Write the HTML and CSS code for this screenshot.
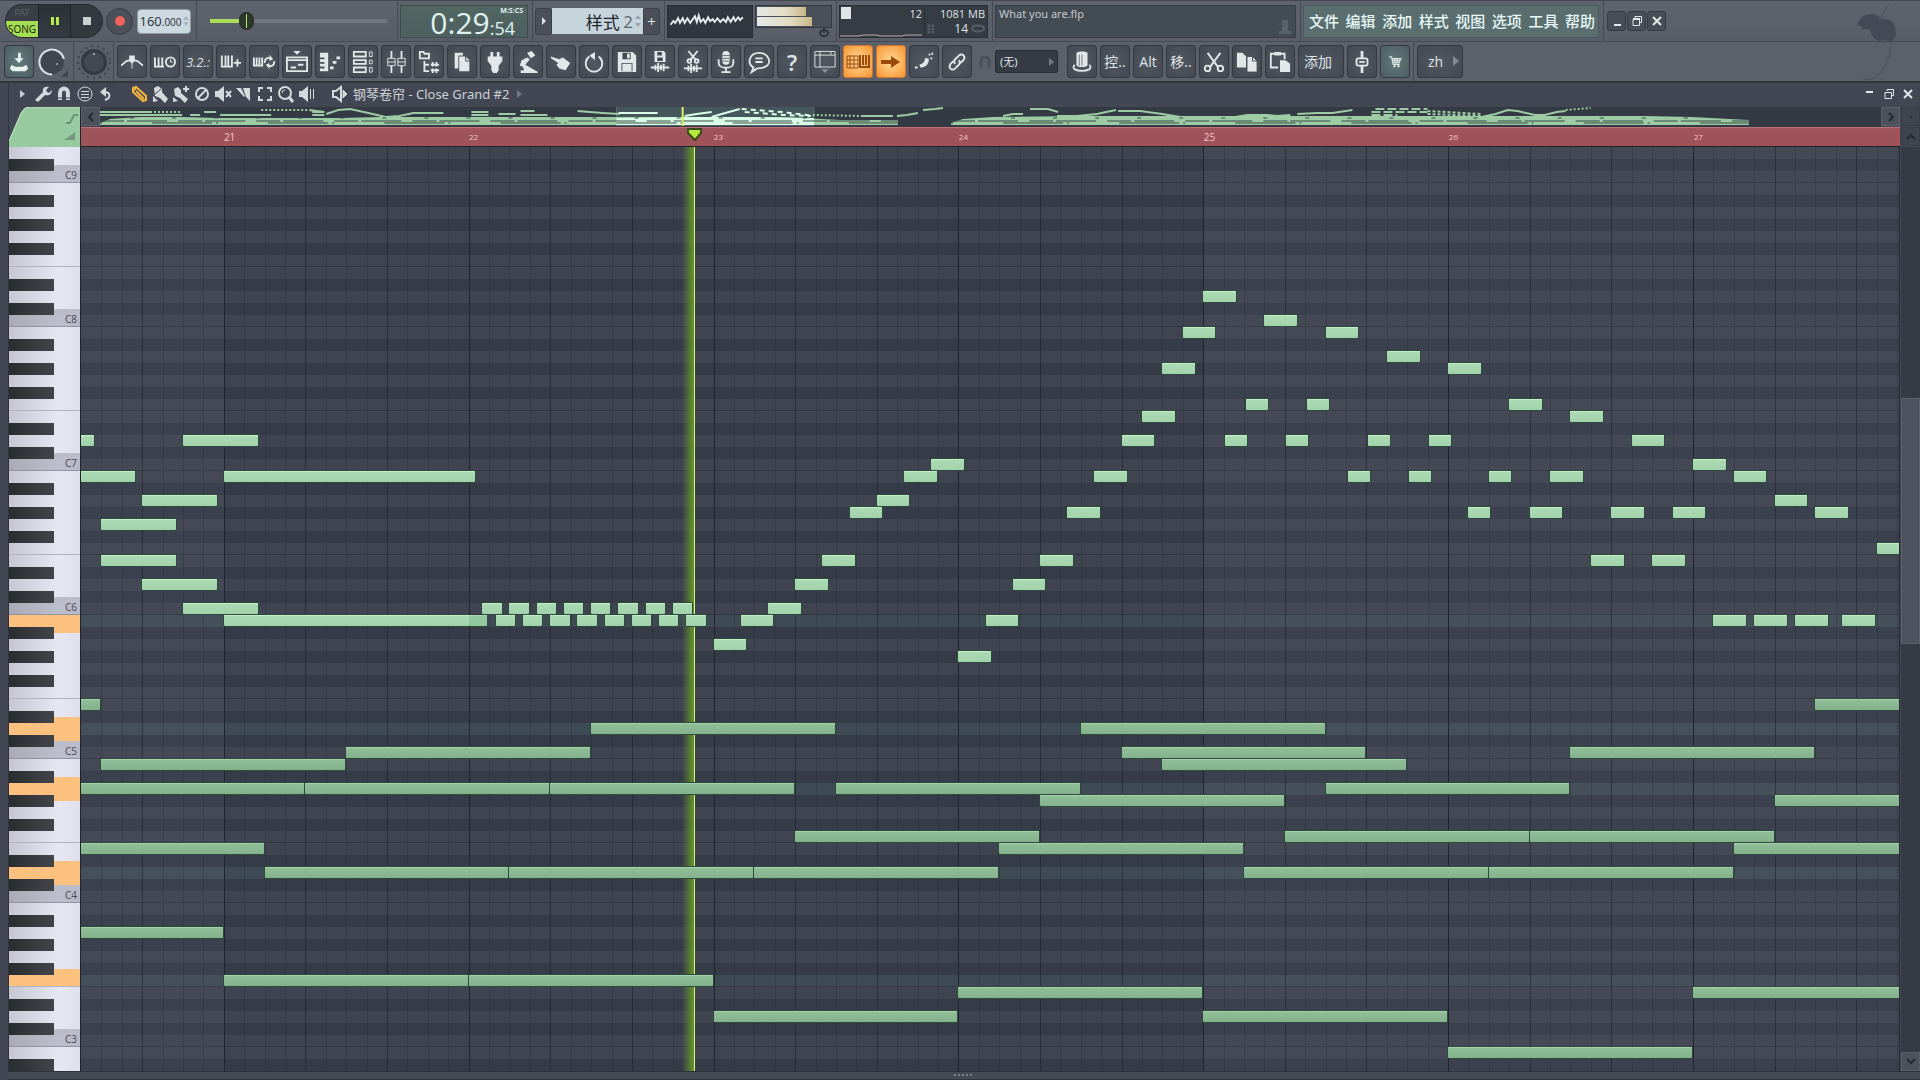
FILE: index.html
```html
<!DOCTYPE html>
<html lang="zh">
<head>
<meta charset="utf-8">
<title>What you are.flp</title>
<link rel="stylesheet" href="styles.css">
</head>
<body>
<div class="app">
  <header class="bar bar-main">
    <section class="sec sec-transport">
      <div class="transport">
        <button class="mode" aria-label="PAT / SONG"><span class="pat">PAT</span><span class="song">SONG</span></button>
        <button class="tbtn pause" aria-label="Pause"><svg width="10" height="10"><path d="M1 1h3v8H1zM6 1h3v8H6z" fill="#b4ea4c"/></svg></button>
        <button class="tbtn stop" aria-label="Stop"><svg width="8" height="8"><path d="M0 0h8v8H0z" fill="#c9ced0"/></svg></button>
      </div>
      <button class="rec" aria-label="Record"><svg width="12" height="12"><circle cx="6" cy="6" r="5" fill="#f0625c"/></svg></button>
      <div class="tempo"><span class="big">160</span><span class="small">.000</span><svg width="6" height="12"><path d="M0 5l3-4 3 4zM0 7l3 4 3-4z" fill="#a9b3bb"/></svg></div>
    </section>
    <section class="sec sec-pitch"><input class="pitch" type="range" min="0" max="100" value="18" aria-label="Song position"></section>
    <section class="sec"><div class="clock"><span class="clock-main">0:29</span><span class="clock-side"><span class="unit">M:S:CS</span><span class="cs">:54</span></span></div></section>
    <section class="sec">
      <div class="pattern">
        <button class="pbtn" aria-label="Pattern menu"><svg width="6" height="10"><path d="M1 1l4 4-4 4z" fill="#d9dfe2"/></svg></button>
        <div class="pname">样式 <span class="pnum">2</span><svg width="6" height="14"><path d="M0 5l3-4 3 4zM0 9l3 4 3-4z" fill="#9aa5ad"/></svg></div>
        <button class="pbtn" aria-label="Add pattern">+</button>
      </div>
    </section>
    <section class="sec sec-scope">
      <div class="scope"><svg viewBox="0 0 86 33" width="84" height="31"><path d="M1 20l3-4 2 2 3-5 2 5 3-5 2 5 3-5 3 5 2-3 3-4 2 6 2-7 2 7 3-3 2 4 3-6 2 4 3-2 2 3 3-4 3 4 3-3 3 3 2-5 3 5 3-5 2 4 3-4 2 3 3-3" fill="none" stroke="#e6eaec" stroke-width="2"/></svg></div>
      <div class="meters"><div class="meter-box"><div class="meter m1"></div><div class="meter m2"></div></div><svg class="meter-knob" width="12" height="10"><ellipse cx="6" cy="5" rx="4" ry="3" fill="none" stroke="#31363e" stroke-width="2"/><path d="M6 0v5" stroke="#31363e" stroke-width="2"/></svg></div>
    </section>
    <section class="sec">
      <div class="cpu">
        <div class="cpu-graph"><span class="cpu-block"></span><span class="cpu-val">12</span><svg class="cpu-line" width="84" height="4"><path d="M0 3h18l6-1h12l4 1h22l4-1h16" stroke="#b9a9ae" fill="none"/></svg></div>
        <div class="cpu-mem"><span>1081 MB</span><span class="poly"><svg width="8" height="10"><path d="M0 2h8M0 5h8M0 8h8M2 0v10M6 0v10" stroke="#596067"/></svg><b>14</b><svg width="14" height="9"><ellipse cx="7" cy="4.500" rx="6" ry="3" fill="none" stroke="#596067" stroke-width="2"/></svg></span></div>
      </div>
    </section>
    <section class="sec"><div class="hint"><span>What you are.flp</span><svg width="14" height="17"><path d="M4 1h6v11H4zM1 12h12v3H1z" fill="#596169"/></svg></div></section>
    <section class="sec sec-menu">
      <nav class="menu"><a href="#">文件</a><a href="#">编辑</a><a href="#">添加</a><a href="#">样式</a><a href="#">视图</a><a href="#">选项</a><a href="#">工具</a><a href="#">帮助</a></nav>
    </section>
    <div class="winbtns">
      <button aria-label="Minimize"><svg width="12" height="12"><path d="M3 9h7v2H3z" fill="#e3e7e9"/></svg></button>
      <button aria-label="Restore"><svg width="12" height="12" fill="none" stroke="#e3e7e9"><path d="M4 3V1.500h6.500v6H9M2 4.500h6.500v6H2z"/><path d="M2 4h7" stroke-width="2"/></svg></button>
      <button aria-label="Close"><svg width="12" height="12"><path d="M2 2l8 8M10 2l-8 8" stroke="#e3e7e9" stroke-width="2"/></svg></button>
    </div>
    <svg class="logo" viewBox="0 0 50 90" width="50" height="78"><path d="M0 26c1-7 7-13 15-13 6 0 10 2 13 6 6-1 12 1 14 5 2 4 3 9 2 15-2 3-4 5-6 5-3-1-6-2-9-1-4 2-8 0-11-4-2-3-3-7-4-8-3-2-6-1-10 0l2-4z" fill="#444a55"/><path d="M27 20c1-7 5-13 10-19M39 44c0 14-6 30-15 40-5 4-11 5-17 4" fill="none" stroke="#484e58" stroke-width="1"/></svg>
  </header>

  <div class="bar bar-tools">
    <div class="group group-a">
      <button class="tool teal" aria-label="Export"><svg viewBox="0 0 24 24"><path d="M11 2h3v6h3l-5 5-5-5h4zM4 15l3 2h10l3-2 2 4-3 3H5l-3-3z" fill="#e8f2ef"/><path d="M8 15h8v2H8z" fill="#5a7573"/></svg></button>
      <svg class="knob" viewBox="0 0 32 32"><circle cx="16" cy="16" r="12" fill="#40464f"/><path d="M16 28.500A12.500 12.500 0 1 1 28 13" fill="none" stroke="#d8dde0" stroke-width="2"/><circle cx="21" cy="18" r="1" fill="#a5acb2"/><path d="M32 24v7h-7z" fill="#41474f"/></svg>
    </div>
    <div class="group group-b"><svg class="knob" viewBox="0 0 36 36"><circle cx="18" cy="18" r="16" fill="none" stroke="#3e444d" stroke-width="2" stroke-dasharray="2 4"/><circle cx="18" cy="18" r="13" fill="#343a43"/><circle cx="18" cy="18" r="10" fill="#434953"/><circle cx="18" cy="10" r="1" fill="#b4babf"/></svg></div>
    <div class="group group-c">
      <button class="tool" aria-label="Metronome"><svg viewBox="0 0 24 24" fill="none" stroke="#e3e7e9" stroke-width="2"><path d="M0 16l6-5 4-1M24 16l-6-5-4-1"/><path d="M9 5h6v6l-3 3-3-3z" fill="#e3e7e9" stroke="none"/><path d="M12 12v7" stroke-width="1"/></svg></button>
      <button class="tool" aria-label="Wait for input"><svg viewBox="0 0 24 24" fill="none" stroke="#e3e7e9" stroke-width="2"><path d="M1 7v10h10M5 7v9M9 7v9"/><circle cx="18" cy="12" r="5"/><path d="M18 9v3h3" stroke-width="1"/></svg></button>
      <button class="tool count"><i>3.2.:</i></button>
      <button class="tool" aria-label="Step edit"><svg viewBox="0 0 24 24" fill="none" stroke="#e3e7e9" stroke-width="2"><path d="M2 5v12h11V5M6 5v11M9 5v11M15 13h8M19 9v8"/></svg></button>
      <button class="tool" aria-label="Loop record"><svg viewBox="0 0 24 24" fill="none" stroke="#e3e7e9" stroke-width="2"><path d="M1 7v9h9V7M4 7v8M7 7v8"/><path d="M13 13c-1-5 4-7 7-4M23 11c1 5-4 7-7 4"/><path d="M18 4l4 5-4 2zM18 20l-4-5 4-2z" fill="#e3e7e9" stroke="none"/></svg></button>
      <button class="tool" aria-label="Playlist"><svg viewBox="0 0 24 24" fill="none" stroke="#e3e7e9"><path d="M8 0h8l-4 4z" fill="#e3e7e9" stroke="none"/><path d="M1 7h22v15H1zM1 10h22" stroke-width="2"/><path d="M5 18h6M13 15h6" stroke-width="2"/></svg></button>
      <button class="tool" aria-label="Piano roll"><svg viewBox="0 0 24 24" fill="#e3e7e9"><path d="M1 2h9v20H1v-3h5v-2H1v-3h5v-2H1V9h5V7H1zM12 17h4v3h-4zM15 11h4v3h-4zM19 6h4v3h-4z"/></svg></button>
      <button class="tool" aria-label="Channel rack"><svg viewBox="0 0 24 24" fill="none" stroke="#e3e7e9" stroke-width="2"><path d="M2 1h13v5H2zM2 10h13v4H2zM2 18h13v5H2z"/><path d="M19 1h3v5h-3zM19 10h3v4h-3zM19 18h3v5h-3z" stroke-width="1"/></svg></button>
      <button class="tool" aria-label="Mixer"><svg viewBox="0 0 24 24" fill="none" stroke="#e3e7e9" stroke-width="2"><path d="M7 0v8M7 16v8M18 0v8M18 16v8"/><path d="M3 8h8v8H3zM14 8h8v8h-8zM3 12h8M14 12h8" stroke-width="1"/></svg></button>
      <button class="tool" aria-label="Browser"><svg viewBox="0 0 24 24" fill="none" stroke="#e3e7e9"><path d="M2 1h4l1 2h5v5H2zM7 11v11h5M7 15h5M14 15h9M14 21h9M16 12v5M20 12v5M16 19v5M20 19v5" stroke-width="2"/></svg></button>
      <button class="tool" aria-label="Plugins"><svg viewBox="0 0 24 24" fill="#e3e7e9"><path d="M4 2h9v3H8v14H4z"/><path d="M9 6h7l4 4v12H9z"/><path d="M16 5v6h5" fill="none" stroke="#454b54"/></svg></button>
      <button class="tool" aria-label="Plugin picker"><svg viewBox="0 0 24 24" fill="#e3e7e9"><path d="M7 1h3v5h4V1h3v5h3v5l-4 5v5l-2 3h-4l-2-3v-5l-4-5V6h3z"/></svg></button>
      <button class="tool" aria-label="Tempo tapper"><svg viewBox="0 0 24 24" fill="#e3e7e9"><path d="M11 2l5-2 4 5-5 3zM11 7l3 2-5 6 14 8-1 1H4v-3h4l-2-4-3-1 2-6z"/></svg></button>
      <button class="tool" aria-label="Touch controller"><svg viewBox="0 0 24 24" fill="#e3e7e9"><path d="M1 6l9 3 4-2 8 6-5 8-7-2-3-4 2-2-8-5z"/></svg></button>
      <button class="tool" aria-label="Undo"><svg viewBox="0 0 24 24" fill="none" stroke="#e3e7e9" stroke-width="2"><path d="M7 6a9 9 0 1 0 10 0"/><path d="M13 1v9L7 5z" fill="#e3e7e9" stroke="none"/></svg></button>
      <button class="tool" aria-label="Save"><svg viewBox="0 0 24 24" fill="#e3e7e9"><path d="M2 1h16l4 4v18H2z"/><path d="M7 2h9v7H7zM6 13h12v9H6z" fill="#454b54"/><path d="M12 3h3v5h-3zM7 14h10v8H7z"/></svg></button>
      <button class="tool" aria-label="Render"><svg viewBox="0 0 24 24" fill="#e3e7e9"><path d="M6 0h10l2 2v10H6z"/><path d="M9 1h5v4H9zM9 7h6v4H9z" fill="#454b54"/><path d="M2 18h20M7 15v6M10 13v10M13 15v6M16 14v8" stroke="#e3e7e9" stroke-width="2"/></svg></button>
      <button class="tool" aria-label="Edison"><svg viewBox="0 0 24 24" fill="none" stroke="#e3e7e9" stroke-width="2"><path d="M7 0l8 10M17 0L9 10"/><circle cx="8" cy="11" r="2"/><circle cx="16" cy="11" r="2"/><path d="M2 19h20M7 16v6M10 14v10M13 16v6M16 15v8"/></svg></button>
      <button class="tool" aria-label="Record audio"><svg viewBox="0 0 24 24" fill="none" stroke="#e3e7e9" stroke-width="2"><rect x="8" y="0" width="8" height="15" rx="4" fill="#e3e7e9" stroke="none"/><path d="M4 9v4c0 7 16 7 16 0V9M12 18v4M7 23h10"/><path d="M8 5h8M8 8h8M8 11h8" stroke="#5a6068" stroke-width="1"/></svg></button>
      <button class="tool" aria-label="News"><svg viewBox="0 0 24 24" fill="none" stroke="#e3e7e9" stroke-width="2"><path d="M6 18C-2 13 2 2 12 2s15 11 7 15c-3 2-6 2-9 2l-6 4z"/><path d="M8 8h8M8 12h8"/></svg></button>
      <button class="tool help">?</button>
      <button class="tool" aria-label="Arrange"><svg viewBox="0 0 24 24" fill="none" stroke="#e3e7e9"><path d="M1 0.500h22v17H1zM6.500 1v17M1 4.500h22M18.500 1v3"/><path d="M8 20h8l-4 4z" fill="#8b9197" stroke="none"/></svg></button>
      <button class="tool hot" aria-label="Typing keyboard"><svg viewBox="0 0 24 24" fill="none" stroke="#9c4a0c" stroke-width="2"><path d="M1 6h11v12H1zM1 10h11M1 14h11M4 6v12M8 6v12" stroke-width="1"/><path d="M14 5v12h9V5M17 5v10M20 5v10"/></svg></button>
      <button class="tool hot" aria-label="Follow"><svg viewBox="0 0 24 24"><path d="M2 10h10V6l9 6-9 6v-4H2z" fill="#9c4a0c"/></svg></button>
      <button class="tool" aria-label="Slide"><svg viewBox="0 0 24 24" fill="#e3e7e9"><path d="M13 8h4c1 6-3 10-9 10l-1-3c4-1 6-3 6-7zM2 17h3v2H2zM17 3h2v2h-2zM20 2h2v2h-2zM19 7h2v2h-2z"/></svg></button>
      <button class="tool" aria-label="Link"><svg viewBox="0 0 24 24" fill="none" stroke="#e3e7e9" stroke-width="2"><path d="M10 14c-2-2-1-4 0-5l4-4c4-3 8 1 5 5l-3 3M14 10c2 2 1 4 0 5l-4 4c-4 3-8-1-5-5l3-3"/></svg></button>
    </div>
    <div class="group group-d">
      <svg class="dim" viewBox="0 0 12 14" width="12" height="14"><path d="M2 13V6c0-5 8-5 8 0v7" fill="none" stroke="#4b515b" stroke-width="3"/></svg>
      <select class="snap" aria-label="Snap"><option>(无)</option></select>
      <svg class="snap-arrow" width="5" height="9"><path d="M0 0l5 4-5 4z" fill="#747b84"/></svg>
    </div>
    <div class="group group-e">
      <button class="tool" aria-label="Tools"><svg viewBox="0 0 24 24" fill="#e3e7e9"><path d="M6 2c3-2 9-2 12 0v14c-3 2-9 2-12 0z"/><path d="M4 15c-8 9 24 9 16 0" fill="none" stroke="#e3e7e9" stroke-width="2"/><path d="M9 4v12M12 4v12" stroke="#6b7179"/></svg></button>
      <button class="tool text">控..</button>
      <button class="tool text">Alt</button>
      <button class="tool text">移..</button>
      <button class="tool" aria-label="Cut"><svg viewBox="0 0 24 24" fill="none" stroke="#e3e7e9" stroke-width="2"><path d="M5 2l11 15M19 2L8 17"/><circle cx="5" cy="19" r="3"/><circle cx="19" cy="19" r="3"/></svg></button>
      <button class="tool" aria-label="Copy"><svg viewBox="0 0 24 24" fill="#e3e7e9"><path d="M1 2h6l4 4v12H1z"/><path d="M12 6h6l5 5v12H12z" stroke="#454b54"/><path d="M18 6v5h5" fill="none" stroke="#454b54"/></svg></button>
      <button class="tool" aria-label="Paste"><svg viewBox="0 0 24 24" fill="none" stroke="#e3e7e9" stroke-width="2"><path d="M10 18H2V3h15v6"/><path d="M6 1h7v4H6zM12 10h6l5 4v9H12z" fill="#e3e7e9" stroke="none"/></svg></button>
      <button class="tool text wide">添加</button>
      <button class="tool" aria-label="Fader"><svg viewBox="0 0 24 24" fill="none" stroke="#e3e7e9" stroke-width="2"><path d="M12 0v8M12 16v8" stroke-width="3"/><rect x="6" y="8" width="12" height="8" rx="2"/><path d="M9 12h6"/></svg></button>
      <button class="tool teal cart" aria-label="Shop"><svg viewBox="0 0 24 24" fill="none" stroke="#dbe5e3" stroke-width="2"><path d="M2 4h4l3 13h11M7 7h15l-3 7H9M8 10h13M12 7v7M16 7v7"/><circle cx="11" cy="20" r="1"/><circle cx="18" cy="20" r="1"/></svg></button>
    </div>
    <div class="group group-f"><button class="tool text lang">zh<svg width="6" height="11"><path d="M0 0l6 5-6 5z" fill="#868c94"/></svg></button></div>
  </div>

  <main class="window">
    <div class="titlebar">
      <div class="ticons">
        <svg viewBox="0 0 18 18"><path d="M7 5l5 4-5 4z" fill="#c9ced4"/></svg>
        <svg viewBox="0 0 18 18" fill="#d5d9de"><path d="M1 15l8-8c-1-4 2-6 6-5l-3 3 1 2 2 1 3-3c0 4-3 6-7 5l-7 7z"/></svg>
        <svg viewBox="0 0 18 18" fill="none"><path d="M5 15V8c0-6 8-6 8 0v7" stroke="#d5d9de" stroke-width="4"/><path d="M3 13h4M11 13h4" stroke="#42475a" stroke-width="1"/></svg>
        <svg viewBox="0 0 18 18" fill="none" stroke="#d5d9de"><circle cx="9" cy="9" r="7"/><path d="M5 6.500h8M5 9.500h8M5 12.500h8"/></svg>
        <svg viewBox="0 0 18 18" fill="none" stroke="#d5d9de" stroke-width="2"><path d="M8 15c6-2 6-8-1-8"/><path d="M9 2v10L3 7z" fill="#d5d9de" stroke="none"/></svg>
      </div>
      <div class="ticons tools">
        <svg viewBox="0 0 18 18" fill="none" stroke="#f0b440" stroke-width="2"><path d="M3 3l3-1 10 9v4l-3 1L3 7z"/><path d="M3 6l3-3M6 6l8 8"/></svg>
        <svg viewBox="0 0 18 18" fill="#d5d9de"><path d="M3 3l4-2 4 3v3l6 7-3 4-5-5-5-2zM2 11l5 5-5 1z"/><path d="M4 9l6-5" stroke="#42475a"/></svg>
        <svg viewBox="0 0 18 18" fill="#d5d9de"><path d="M2 4l4-2 3 3v3l7 6-3 4-5-5-5-2zM1 12l5 4-5 1zM13 1h2v6h-2zM11 3h6v2h-6z"/></svg>
        <svg viewBox="0 0 18 18" fill="none" stroke="#d5d9de" stroke-width="2"><circle cx="9" cy="9" r="6"/><path d="M5 13l8-8"/></svg>
        <svg viewBox="0 0 18 18" fill="#d5d9de"><path d="M1 6h3l6-5v16l-6-5H1z"/><path d="M12 6l5 6M17 6l-5 6" stroke="#d5d9de" stroke-width="2"/></svg>
        <svg viewBox="0 0 18 18" fill="#d5d9de"><path d="M1 3h5l4 8-1 1zM8 3h7v13l-4-4z"/></svg>
        <svg viewBox="0 0 18 18" fill="none" stroke="#d5d9de" stroke-width="2"><path d="M3 7V3h4M11 3h4v4M15 11v4h-4M7 15H3v-4"/></svg>
        <svg viewBox="0 0 18 18" fill="none" stroke="#d5d9de"><circle cx="8" cy="8" r="6" stroke-width="2"/><path d="M5 8a3 3 0 0 1 3-3"/><path d="M12 12l4 5" stroke-width="3"/></svg>
        <svg viewBox="0 0 18 18" fill="#d5d9de"><path d="M1 6h3l6-5v16l-6-5H1zM12 4h1v10h-1zM15 4h1v10h-1z"/></svg>
      </div>
      <h1 class="title"><svg viewBox="0 0 18 18" fill="none" stroke="#d5d9de"><path d="M2 6h3l5-4v14l-5-4H2z" stroke-width="2"/><path d="M12 5l4 4-4 4z" fill="#d5d9de"/></svg>钢琴卷帘 - Close Grand #2<svg class="more" width="5" height="9"><path d="M0 0l5 4-5 4z" fill="#747b84"/></svg></h1>
      <div class="wctl">
        <button aria-label="Minimize"><svg width="12" height="12"><path d="M2 3h7v2H2z" fill="#e3e7e9"/></svg></button>
        <button aria-label="Restore"><svg width="12" height="12" fill="none" stroke="#e3e7e9"><path d="M4 3V1.500h6.500v6H9M2 4.500h6.500v6H2z"/></svg></button>
        <button aria-label="Close"><svg width="12" height="12"><path d="M2 2l8 8M10 2l-8 8" stroke="#e3e7e9" stroke-width="2"/></svg></button>
      </div>
    </div>

    <div class="editor">
      <div class="corner"><svg viewBox="0 0 71 40" preserveAspectRatio="none"><path d="M0 40V34L12 6Q15 0 20 0H71V40z" fill="#98ca9f"/><path d="M0 34L12 6Q15 0 20 0H71" fill="none" stroke="#c4e6c8"/><path d="M57 16h4l4-8h4" fill="none" stroke="#6c9375" stroke-width="2"/><path d="M66 25v8H55z" fill="#729a7a"/></svg></div>
      <button class="sq prev" aria-label="Scroll left"><svg width="10" height="10"><path d="M7 1L3 5l4 4" fill="none" stroke="#242a33" stroke-width="2"/></svg></button>
      <div class="overview">
        <svg viewBox="20 0 1779 19" preserveAspectRatio="none">
          <path d="M536-1h197v20H536z" fill="#46565d" stroke="#61717a"/>
          <g fill="none" stroke="#9ccba4">
            <path stroke-width="2" d="M20 5h50M20 8h82M110 8h10M124 5h12M140 8h51M232 5h12M232 8h12M345 6h18M391 5h17M391 8h17M418 7h17M440 4h14M440 8h27M782 9h30"/>
            <path stroke-width="2" stroke-dasharray="2 2" d="M70 5h31M181 3h48M732 8l50 1M1484 3l25-2"/>
            <path stroke-width="2" d="M229 3l15 2M246 7l12-4 12-1 18 4 17 4 14-1 14-3 15 0M497 4l25 2 17 1M816 9l10-1 11-2M842 3l12-1 8-1M922 9l10-2h10M949 2h18l10 3M976 9h20l20-2 9-2 10-2M1037 4h22l22 3 18 3M1154 10l12-2h20l10 1 13-1M1216 7l20-1h15l20-3M1400 10l14-3 12-4 10 1 17 4 10 0 12-3 9-1"/>
            <path stroke-width="2" stroke-dasharray="9 3" d="M1294 2h52M1290 5h56M1290 8h26"/>
            <path stroke-width="2" stroke-dasharray="3 2" d="M1346 4l54 3M1346 7l54 2"/>
          </g>
          <g fill="#9ccba4"><path d="M20 18v-2l10-4 30-2h40l40 1h120l40-1h400l60 3h57v5zM870 18v-2l12-4 30-2 90-1h560l48 1 57 3v5z"/></g>
          <path d="M536 11l60-1h60l77 1v7H536z" fill="#d9ffe6"/>
          <path d="M20 14H817M870 14h797" stroke="#3c4d4b" stroke-dasharray="24 3 40 11"/>
          <path d="M50 11H760M930 11h690" stroke="#3c4d4b" stroke-dasharray="4 38"/>
          <path d="M20 16H817M870 16h797" stroke="#3c4d4b" stroke-dasharray="2 50 60 4"/>
          <g fill="none" stroke="#d9ffe6" stroke-width="2"><path d="M538 6h39M604 9l12-2 15-2M631 10l10-3 18-5"/><path stroke-dasharray="5 4" d="M661 2l40 3 32 4M664 5l40 3 26 1"/></g>
          <path d="M602-1v20" stroke="#dcec5a" stroke-width="2"/>
        </svg>
      </div>
      <button class="sq next" aria-label="Scroll right"><svg width="10" height="10"><path d="M3 1l4 4-4 4" fill="none" stroke="#242a33" stroke-width="2"/></svg></button>
      <button class="sq dotb" aria-label="Zoom"><svg width="10" height="10"><circle cx="5" cy="5" r="1" fill="#20252d"/></svg></button>
      <div class="ruler" id="ruler"></div>
      <button class="sq up" aria-label="Scroll up"><svg width="12" height="8"><path d="M2 6l4-4 4 4" fill="none" stroke="#242a33" stroke-width="2"/></svg></button>
      <div class="keys" id="keys"></div>
      <div class="grid" id="grid">
        <div class="rows" id="rows"></div>
      </div>
      <div class="vscroll">
        <div class="track-top"></div><div class="thumb"></div><div class="track-bottom"></div>
        <button class="sq" aria-label="Scroll down"><svg width="12" height="8"><path d="M2 2l4 4 4-4" fill="none" stroke="#242a33" stroke-width="2"/></svg></button>
      </div>
    </div>
    <footer class="grip"><svg width="20" height="3"><path d="M0 1h20" stroke="#7e848e" stroke-width="2" stroke-dasharray="2 2"/></svg></footer>
  </main>
</div>
<script src="app.js"></script>
</body>
</html>
```
FILE: styles.css
```css
* { box-sizing: border-box; }
body {
  margin: 0;
  background: #3f444f;
  color: #dfe3e6;
  font-family: "Noto Sans", "Noto Sans CJK SC", sans-serif;
  overflow: hidden;
}
button { border: 0; padding: 0; margin: 0; font: inherit; color: inherit; display: flex; align-items: center; justify-content: center; }
svg { display: block; flex: none; }
.app { height: 100vh; display: flex; flex-direction: column; }

/* top bars */
.bar { display: flex; flex: none; background: linear-gradient(#5e636e, #585d68); }
.bar-main { height: 42px; border-top: 1px solid #424751; border-bottom: 1px solid #454a55; position: relative; }
.bar-tools { height: 41px; border-bottom: 2px solid #31363f; background: #5b606b; }
.sec { display: flex; align-items: center; padding: 0 4px 0 2px; border-right: 1px solid #454a55; }
.sec-transport { padding: 0 5px; }
.transport { display: flex; width: 98px; height: 34px; border-radius: 17px; overflow: hidden; background: #2e333a; border: 1px solid #262a31; }
.mode { width: 32px; flex: none; flex-direction: column; background: #3a3f47; font-size: 9px; line-height: 16px; }
.pat { color: #5c6169; }
.song { width: 100%; height: 16px; background: #a5de53; color: #1f2b10; font-size: 10px; }
.tbtn { flex: 1; background: linear-gradient(#2c3138, #363b43); border-left: 1px solid #20242a; }
.stop { background: #343940; }
.rec { width: 27px; height: 27px; border-radius: 14px; background: #4b5059; border: 1px solid #363b43; margin: 0 4px 0 3px; }
.tempo { display: flex; align-items: center; justify-content: center; width: 54px; height: 25px; border-radius: 4px; background: #cdd9e1; color: #262d35; font-family: "Open Sans", sans-serif; border: 1px solid #8f9ba5; }
.tempo .big { font-size: 13px; line-height: 24px; }
.tempo .small { font-size: 10px; margin: 2px 1px 0 0; }
.sec-pitch { padding: 0 10px 0 13px; }
.pitch { appearance: none; width: 177px; height: 20px; margin: 0; background: linear-gradient(90deg, #a9dc58 20%, #70757f 20%) center / 100% 4px no-repeat; }
.pitch::-webkit-slider-thumb { appearance: none; width: 15px; height: 18px; border-radius: 8px; background: linear-gradient(90deg, #2c3a2c 45%, #b7e36a 45%, #b7e36a 58%, #2c3a2c 58%); border: 2px solid #2b3029; }
.clock { display: flex; justify-content: flex-end; width: 128px; height: 33px; padding-right: 4px; background: linear-gradient(#526663, #4d605f); border: 1px solid #414b50; color: #e0f3f1; font-family: "Open Sans", sans-serif; }
.clock-main { font-size: 30px; line-height: 33px; }
.clock-side { display: flex; flex-direction: column; align-items: flex-end; }
.unit { font: 700 7px/9px "Noto Sans", sans-serif; }
.cs { font-size: 18px; line-height: 26px; padding-right: 8px; }
.pattern { display: flex; align-items: center; width: 125px; height: 27px; }
.pbtn { width: 17px; height: 27px; background: #4a4f59; border: 1px solid #3a3f48; border-radius: 3px; font-size: 15px; line-height: 20px; }
.pname { flex: 1; height: 26px; display: flex; align-items: center; justify-content: flex-end; padding-right: 2px; gap: 2px; background: #c6d4db; color: #1f262d; font-size: 17px; white-space: pre; }
.pnum { color: #5b6770; font-family: "Open Sans", sans-serif; margin-left: -3px; }
.sec-scope { gap: 2px; }
.scope { width: 86px; height: 33px; background: #31363f; border: 1px solid #282c34; }
.meters { width: 77px; height: 33px; display: flex; flex-direction: column; align-items: flex-end; }
.meter-box { width: 77px; height: 23px; padding: 1px; display: flex; flex-direction: column; gap: 1px; background: #4a4f59; border: 1px solid #343942; }
.meter { flex: 1; background: linear-gradient(90deg, #e3e7e6, #e2dcc4 60%, #c9b687); }
.m1 { width: 67%; }
.m2 { width: 76%; }
.meter-knob { margin-right: 2px; }
.cpu { width: 149px; height: 33px; display: flex; background: #363c44; border: 1px solid #2b3038; font: 11px/14px "Open Sans", sans-serif; }
.cpu-graph { width: 85px; display: flex; flex-wrap: wrap; justify-content: space-between; border-right: 1px solid #2b3038; }
.cpu-block { width: 10px; height: 12px; margin: 1px; background: #e1e4e6; }
.cpu-val { padding: 1px 2px; }
.cpu-line { align-self: flex-end; }
.cpu-mem { flex: 1; display: flex; flex-direction: column; align-items: flex-end; padding: 1px 2px; gap: 1px; }
.poly { display: flex; width: 100%; align-items: center; gap: 3px; }
.poly b { margin-left: auto; font-weight: 400; font-size: 12px; }
.hint { width: 301px; height: 33px; display: flex; justify-content: space-between; padding: 1px 3px; background: #434b53; border: 1px solid #383e47; font-size: 11px; line-height: 14px; color: #c3c9cd; }
.hint svg { align-self: flex-end; }
.menu { width: 296px; height: 33px; display: flex; align-items: center; justify-content: space-between; padding: 0 3px 0 5px; background: #5a6e70; border: 1px solid #4a5a60; }
.menu a { color: #e6f7f5; text-decoration: none; font-size: 15px; line-height: 22px; font-weight: 500; }
.winbtns { display: flex; align-items: center; gap: 1px; padding-left: 3px; }
.winbtns button { width: 19px; height: 20px; background: #484d57; border: 1px solid #353a43; border-radius: 3px; }
.logo { position: absolute; right: 16px; top: 2px; }

/* tool buttons */
.group { display: flex; align-items: center; }
.group-a { gap: 2px; width: 74px; padding-left: 4px; border-right: 1px solid #454a55; }
.group-b { width: 40px; justify-content: center; border-right: 1px solid #454a55; margin-right: 3px; }
.knob { width: 32px; height: 34px; }
.group-b .knob { width: 36px; height: 36px; }
.group-c, .group-e { gap: 3px; }
.tool { width: 30px; height: 33px; flex: none; background: radial-gradient(#525861, #434851); border: 1px solid #343942; border-radius: 3px; }
.tool svg { width: 22px; height: 24px; }
.tool.cart svg { width: 14px; height: 17px; }
.teal { background: radial-gradient(#627b7c, #4c5c61); }
.hot { background: radial-gradient(#ffdc96, #f59331); border-color: #d0752b; }
.hot svg { width: 24px; }
.count { font: 13px/20px "Open Sans", sans-serif; }
.help { font-size: 22px; line-height: 30px; font-weight: 600; }
.text { font-size: 15px; line-height: 30px; font-family: "Open Sans", "Noto Sans CJK SC", sans-serif; font-size: 14px; }
.wide { width: 46px; padding-right: 6px; }
.group-d { margin-left: 7px; gap: 4px; width: 79px; position: relative; }
.snap { appearance: none; width: 63px; height: 23px; padding: 0 4px; background: #353a43; border: 1px solid #292e36; border-radius: 2px; color: #dfe3e6; font: 11px/20px "Noto Sans", "Noto Sans CJK SC", sans-serif; }
.snap-arrow { position: absolute; right: 4px; top: 16px; }
.group-e { margin-left: 9px; padding-right: 3px; border-right: 1px solid #454a55; }
.group-f { padding-left: 3px; }
.lang { width: 46px; gap: 10px; padding-left: 7px; }
.tool.lang svg { width: 6px; height: 11px; }

/* piano roll window */
.window { flex: 1; min-height: 0; display: flex; flex-direction: column; padding-left: 8px; background: #424753; }
.titlebar { flex: none; height: 24px; display: flex; align-items: center; padding-bottom: 2px; border-left: 1px solid #2f343d; }
.ticons { display: flex; gap: 3px; padding-left: 4px; }
.ticons svg, .title svg { width: 18px; height: 18px; }
.tools { padding-left: 15px; }
.title { display: flex; align-items: center; flex: 1; margin: 0; padding-left: 15px; font-size: 13px; line-height: 20px; font-weight: 400; color: #cdd1d7; white-space: pre; }
.title .more { width: 5px; height: 9px; margin-left: 8px; }
.title svg:first-child { margin-right: 4px; }
.wctl { display: flex; gap: 7px; padding-right: 6px; }
.wctl button { background: none; }
.editor { flex: 1; min-height: 0; display: grid; grid-template-columns: 72px 19px 1fr 19px 20px; grid-template-rows: 20px 20px 1fr; border-left: 1px solid #2f343d; }
.corner { grid-row: 1 / 3; border-right: 1px solid #20252c; }
.corner svg { width: 100%; height: 40px; }
.sq { width: 19px; height: 19px; background: #4c515c; border: 1px solid #5a5f6a; }
.dotb, .up { background: #3f444f; border-color: #383d47; margin-left: 1px; }
.overview { min-width: 0; background: #343a43; }
.overview svg { width: 100%; height: 19px; }
.ruler { grid-column: 2 / 5; position: relative; background: linear-gradient(#a0545b, #9d5359); border-top: 1px solid #bc7178; border-bottom: 1px solid #20252c; overflow: hidden; }
.bar-no { position: absolute; top: 2px; color: #f5c4c6; font: 8px/14px "Open Sans", sans-serif; }
.bar-no.strong { font-size: 10px; }
.marker { position: absolute; top: 0; margin-left: -8px; }
.keys { overflow: hidden; border-right: 1px solid #20252c; }
.grid { grid-column: 2 / 5; position: relative; overflow: hidden; background: #3b404c; border-right: 1px solid #262b33; }
.key { height: 12px; display: flex; background: linear-gradient(90deg, #c6c7d2, #e6e7f3 70%, #dfe0ec); }
.key.low { border-bottom: 1px solid #b2b3bf; }
.key.c { background: linear-gradient(90deg, #a9aab5, #bdbecb 70%, #b8b9c6); justify-content: flex-end; padding-right: 3px; color: #474a57; font: 10px/8px "Open Sans", sans-serif; border-bottom: 1px solid #93949f; }
.key.on { background: #fdc17f; }
.key.black::before { content: ""; width: 45px; height: 12px; background: linear-gradient(90deg, #2a2d30, #42444a); }
.half { flex: 1; display: flex; flex-direction: column; }
.half::before, .half::after { content: ""; flex: 1; }
.half.up-on::before, .half.down-on::after { background: #fdc17f; }
.half.down-c::after { background: #bbbcc9; }
.rows { position: absolute; inset: 0; }
.row { height: 12px; background: rgba(130, 135, 155, .06); }
.row.sharp { background: rgba(25, 33, 45, .13); }
.row.tint { background: rgba(85, 140, 135, .15); }
.row.edge { border-bottom: 1px solid rgba(25, 30, 40, .35); }
.light { position: absolute; top: 0; bottom: 0; background: rgba(140, 145, 165, .08); }
.line { position: absolute; top: 0; bottom: 0; width: 1px; background: rgba(28, 35, 46, .25); }
.line.beat { background: rgba(25, 31, 42, .55); }
.line.bar-line { background: #20262f; }
.play { position: absolute; top: 0; bottom: 0; width: 13px; margin-left: -12px; background: linear-gradient(90deg, rgba(100, 150, 40, 0), #618f2c 90%); border-right: 1px solid #d5f57e; }
.note { position: absolute; height: 11px; border-radius: 1px; background: linear-gradient(#acdcb4, #a1d2ab); box-shadow: 0 0 0 1px #2d4a3d, inset 0 1px #c3ecc9; }
.note.bass { background: linear-gradient(#90bf99, #84b28d); box-shadow: 0 0 0 1px #2d4a3d, inset 0 1px #a4d0ac; }
.note.over { background: #93c79d; box-shadow: 0 1px #2d4a3d, inset 0 1px #a9d8b1; }
.vscroll { display: flex; flex-direction: column; margin-left: 1px; background: #353a45; }
.track-top { flex: 252; }
.thumb { flex: 244; background: #4d525e; border: 1px solid #5d626e; }
.track-bottom { flex: 409; }
.vscroll .sq { flex: none; }
.grip { flex: none; height: 9px; display: flex; justify-content: center; align-items: center; border-top: 1px solid #2c313a; border-bottom: 1px solid #2f343d; background: #454a55; }
```
FILE: app.js
```js
// Horizontal unit: one grid step, 12 steps to a bar. Step 0 is the start of bar 21.
const FIRST = -7, SPAN = 89.1;
const pct = s => ((s - FIRST) / SPAN * 100) + '%';
const add = (parent, cls, style) => {
  const el = document.createElement('div');
  el.className = cls;
  Object.assign(el.style, style || {});
  parent.appendChild(el);
  return el;
};
const keys = document.getElementById('keys');
const rows = document.getElementById('rows');
const grid = document.getElementById('grid');
const ruler = document.getElementById('ruler');

// Row 0 is D9, going down in semitones.
const black = new Set([1, 4, 6, 8, 11]);
const pressed = new Set([39, 48, 53, 60, 69]);
for (let r = 0; r < 77; r++) {
  const n = r % 12;
  let row = 'row';
  if (black.has(n)) row += ' sharp';
  if (n === 2 || n === 9) row += ' edge';
  if (pressed.has(r)) row += ' tint';
  add(rows, row);
  if (black.has(n)) {
    let half = 'half';
    if (pressed.has(r - 1)) half += ' up-on';
    if (pressed.has(r + 1)) half += ' down-on';
    else if (n === 1) half += ' down-c';
    add(add(keys, 'key black'), half);
  } else {
    let key = 'key';
    if (n === 2) key += ' c';
    if (n === 9) key += ' low';
    if (pressed.has(r)) key += ' on';
    const el = add(keys, key);
    if (n === 2) el.textContent = 'C' + (9 - (r - 2) / 12);
  }
}

add(grid, 'light', { left: 0, width: pct(0) });
add(grid, 'light', { left: pct(48), right: 0 });
for (let s = -6; s < 83; s++) {
  const m = (s + 12) % 12;
  add(grid, m === 0 ? 'line bar-line' : m % 4 === 0 ? 'line beat' : 'line', { left: pct(s) });
}
add(grid, 'play', { left: pct(23.04) });

const note = (s, row, len, cls) => {
  const start = Math.max(s, FIRST);
  add(grid, 'note ' + (cls || ''), {
    left: pct(start),
    width: 'calc(' + ((s + len - start) / SPAN * 100) + '% - 1px)',
    top: row * 12 + 'px'
  });
};
[[-10, 24], [-8, 27], [-2, 24], [-4, 29], [-6, 31], [-6, 34], [-4, 36], [-2, 38]].forEach(([s, r]) => note(s, r, 3.7));
note(0, 27, 12.35);
note(0, 39, 12.1);
note(12, 39, 0.95, 'over');
for (let k = 0; k < 8; k++) {
  note(12.667 + k * 4 / 3, 38, 1);
  note(13.333 + k * 4 / 3, 39, 1);
}
[41, 39, 38, 36, 34, 30, 29, 27, 26].forEach((r, i) => note(24 + i * 4 / 3, r, 1.65));
[42, 39, 36, 34, 30, 27].forEach((r, i) => note(36 + i * 4 / 3, r, 1.65));
[[44, 24], [45, 22], [46, 18], [47, 15], [48, 12], [51, 14], [54, 15], [57, 17], [60, 18], [63, 21], [66, 22], [69, 24],
 [72, 26], [74, 27], [76, 29], [78, 30], [81, 33], [64, 30], [65, 27], [67, 34], [68, 30], [70, 34], [71, 30],
 [73, 39], [75, 39], [77, 39], [79.3, 39]].forEach(([s, r]) => note(s, r, 1.65));
[[49.08, 24], [50.08, 21], [52.08, 24], [53.08, 21], [55.08, 27], [56.08, 24], [58.08, 27], [59.08, 24], [61, 30], [62, 27]].forEach(([s, r]) => note(s, r, 1.12));
[[-7, 46, 1], [78, 46, 12], [-6, 51], [6, 50], [18, 48], [-8, 53], [4, 53], [16, 53], [30, 53], [42, 48], [44, 50], [46, 51],
 [54, 53], [66, 50], [40, 54], [76, 54], [28, 57], [52, 57], [64, 57], [-10, 58], [38, 58], [74, 58], [2, 60], [14, 60],
 [26, 60], [50, 60], [62, 60], [-12, 65], [0, 69], [12, 69], [24, 72], [36, 70], [48, 72], [60, 75], [72, 70]]
  .forEach(([s, r, len]) => note(s, r, len || 12, 'bass'));

for (let b = 21; b <= 27; b++) {
  const el = add(ruler, b % 4 === 1 ? 'bar-no strong' : 'bar-no', { left: pct((b - 21) * 12) });
  el.textContent = b;
}
add(ruler, 'marker', { left: pct(23.04) }).innerHTML =
  '<svg width="17" height="14"><path d="M2 1h13v4l-6 7-7-7z" fill="#b3e83c" stroke="#3c4a17" stroke-width="2"/></svg>';
```
